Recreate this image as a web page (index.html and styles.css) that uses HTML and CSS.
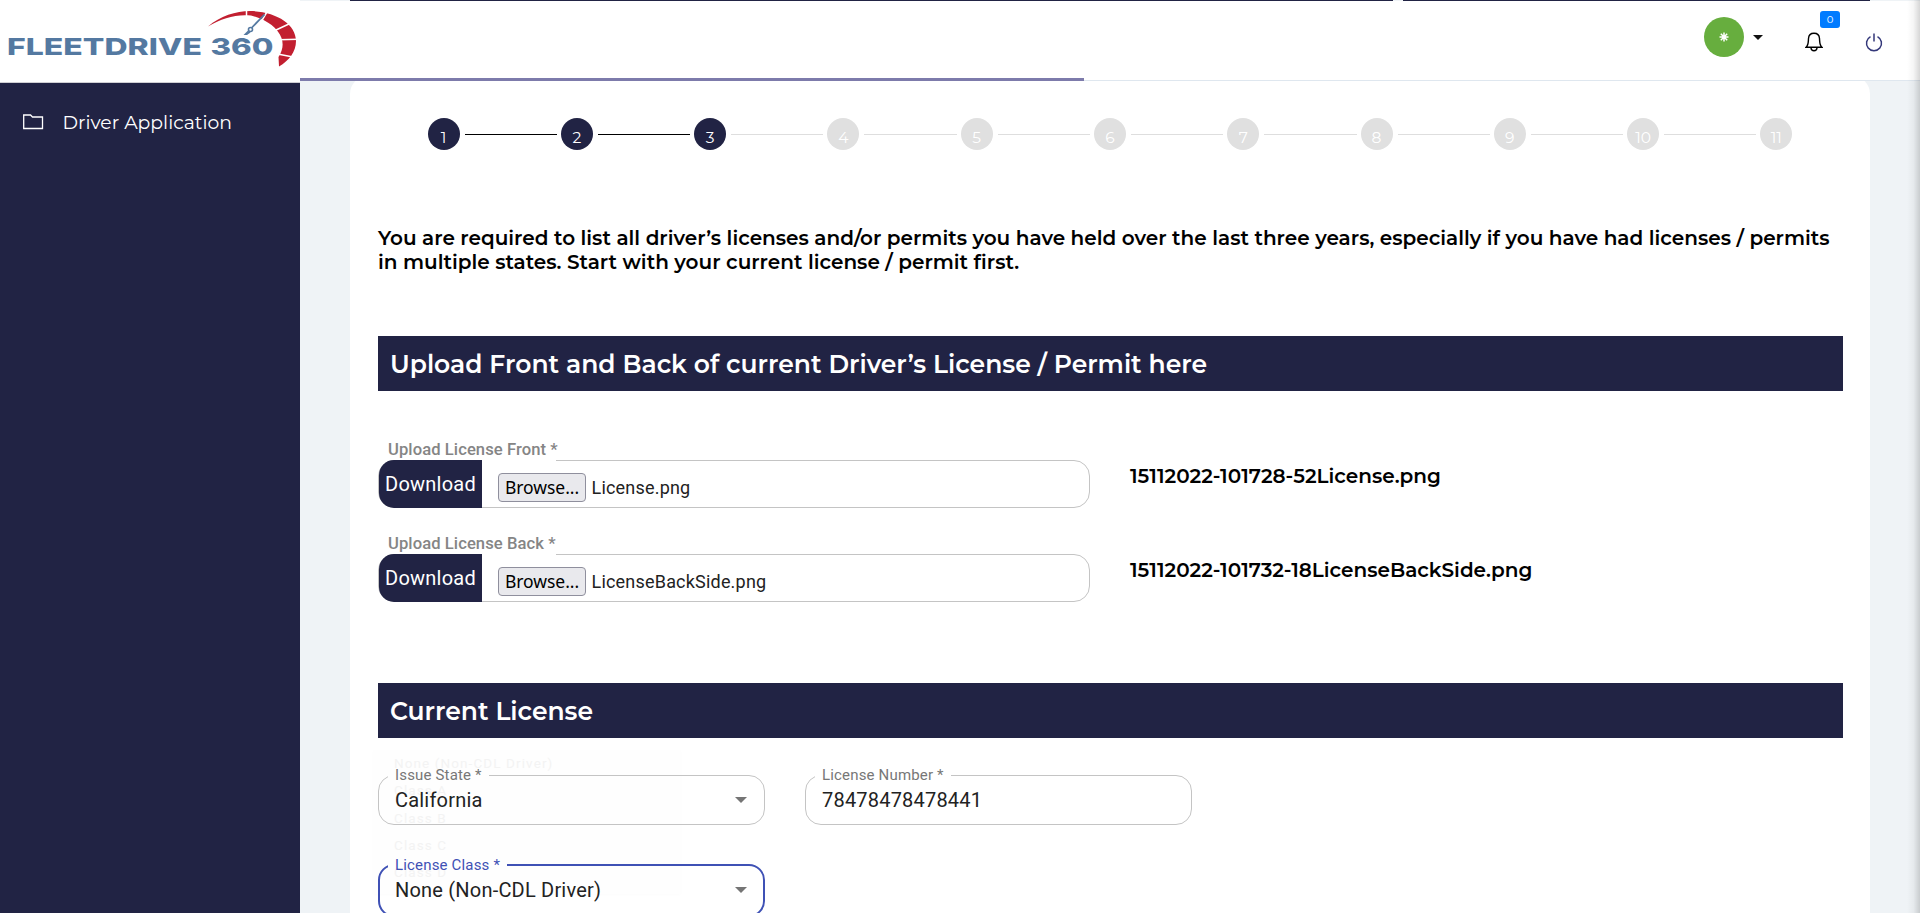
FILE: index.html
```html
<!DOCTYPE html>
<html lang="en">
<head>
<meta charset="utf-8">
<title>FleetDrive 360</title>
<link rel="stylesheet" href="styles.css">
</head>
<body>
<div class="app">
  <aside class="sidebar">
    <div class="brand">
      <svg width="300" height="82" viewBox="0 0 300 82">
        <text class="brand-text" x="7" y="55.200" textLength="195" lengthAdjust="spacingAndGlyphs">FLEETDRIVE</text>
        <text class="brand-text" x="210.500" y="55.200" textLength="63" lengthAdjust="spacingAndGlyphs">360</text>
        <path fill="#c21f30" d="M208 26.500C220 16 236 11 250 11C276 11.500 296 24 296 41C296 52 289 60.500 279 66.500L278.500 57C283 50 283.500 44 281.500 38C278 28 266 19 251 15.500C236 14 222 18 208 26.500Z"/>
        <path stroke="#fff" stroke-width="1.500" fill="none" d="M246.500 10V19M267.500 11L261 22M291 23L275 30.500M298 39.300L279 39.700M293 57L275 53.500"/>
        <path stroke="#5479a1" stroke-width="1.800" fill="none" d="M264.500 14.500L251.500 28"/>
        <circle cx="250.500" cy="29.500" r="2" fill="#fff" stroke="#5479a1" stroke-width="1.600"/>
        <path fill="#5479a1" d="M248 30.500L250.500 32.500L247 35H243.500Z"/>
      </svg>
    </div>
    <nav class="nav">
      <a class="nav-item">
        <svg width="21" height="16" viewBox="0 0 21 16"><path d="M.7 1H7.500L9.500 3H19.500V14.500H.7Z" fill="none" stroke="#fff" stroke-width="1.300"/></svg>
        <span>Driver Application</span>
      </a>
    </nav>
  </aside>
  <div class="main">
    <div class="strip"><i class="strip-a"></i><i class="strip-b"></i></div>
    <header class="topbar">
      <div class="avatar"><svg width="10" height="10" viewBox="-5 -5 10 10"><path d="M-4.500 0H4.500M0-4.500V4.500M-3.200-3.200L3.200 3.200M-3.200 3.200L3.200-3.200" stroke="#fff" stroke-width="1.500"/></svg></div>
      <svg class="caret" width="10" height="5" viewBox="0 0 10 5"><path d="M0 0H10L5 5Z" fill="#111"/></svg>
      <div class="bell">
        <svg width="18" height="20" viewBox="0 0 18 20" fill="none" stroke="#000" stroke-width="1.400"><path d="M1 15.300H17C14.500 13.500 14.800 11 14.500 6.500C14.300 3 12 1.200 9 1.200S3.700 3 3.500 6.500C3.200 11 3.500 13.500 1 15.300ZM6 16C6.300 19.700 11.700 19.700 12 16"/></svg>
        <span class="count">0</span>
      </div>
      <svg class="power" width="18" height="20" viewBox="0 0 18 20" fill="none" stroke="#34387a" stroke-width="1.500"><path d="M9 .5V8.500M5.500 3.600A7.500 7.500 0 1 0 12.500 3.600"/></svg>
    </header>
    <div class="progress"></div>
    <main class="card">
      <ol class="steps">
        <li class="done ln"><b>1</b></li><li class="done ln"><b>2</b></li><li class="done"><b>3</b></li><li><b>4</b></li><li><b>5</b></li><li><b>6</b></li><li><b>7</b></li><li><b>8</b></li><li><b>9</b></li><li><b>10</b></li><li><b>11</b></li>
      </ol>
      <p class="intro">You are required to list all driver’s licenses and/or permits you have held over the last three years, especially if you have had licenses / permits<br>in multiple states. Start with your current license / permit first.</p>
      <h2 class="banner">Upload Front and Back of current Driver’s License / Permit here</h2>
      <section class="uploads">
        <div class="upload">
          <div class="upload-field">
            <label class="upload-label">Upload License Front *</label>
            <div class="upload-box"><a class="download">Download</a><span class="browse">Browse...</span><span class="picked">License.png</span></div>
          </div>
          <div class="filename">15112022-101728-52License.png</div>
        </div>
        <div class="upload">
          <div class="upload-field">
            <label class="upload-label">Upload License Back *</label>
            <div class="upload-box"><a class="download">Download</a><span class="browse">Browse...</span><span class="picked">LicenseBackSide.png</span></div>
          </div>
          <div class="filename">15112022-101732-18LicenseBackSide.png</div>
        </div>
      </section>
      <h2 class="banner">Current License</h2>
      <section class="fields">
        <ul class="fading-menu"><li>None (Non-CDL Driver)</li><li>Class A</li><li>Class B</li><li>Class C</li><li>Class D</li></ul>
        <fieldset class="field"><legend>Issue State *</legend><div class="value">California<svg width="12" height="6" viewBox="0 0 12 6"><path d="M0 0H12L6 6Z" fill="#757575"/></svg></div></fieldset>
        <fieldset class="field"><legend>License Number *</legend><div class="value">78478478478441</div></fieldset>
        <fieldset class="field focused"><legend>License Class *</legend><div class="value">None (Non-CDL Driver)<svg width="12" height="6" viewBox="0 0 12 6"><path d="M0 0H12L6 6Z" fill="#757575"/></svg></div></fieldset>
      </section>
    </main>
  </div>
  <div class="edge-shadow"></div>
</div>
</body>
</html>
```
FILE: styles.css
```css
* { box-sizing: border-box; }
body { margin: 0; font-family: Montserrat, Inter, "Liberation Sans", sans-serif; color: #000; }
.app { position: relative; display: flex; width: 1920px; height: 913px; overflow: hidden; background: #eff3f6; }

.sidebar { width: 300px; flex: none; background: #212344; }
.brand { height: 83px; background: #fff; border-bottom: 1px solid #cfcfd4; }
.brand svg { display: block; }
.brand-text { font-family: Inter, sans-serif; font-weight: 800; font-size: 23.500px; fill: #5479a1; }
.nav { padding-top: 19px; }
.nav-item { display: flex; align-items: center; height: 40px; padding-left: 23px; gap: 18.500px; color: #fff; font-size: 18.800px; }

.main { width: 1620px; flex: none; display: flex; flex-direction: column; }
.strip { height: 1px; flex: none; display: flex; padding-left: 50px; gap: 10px; }
.strip-a { width: 1043px; background: #212344; }
.strip-b { width: 467px; background: #212344; }
.topbar { position: relative; z-index: 2; height: 80px; flex: none; display: flex; justify-content: flex-end; align-items: flex-start; padding-right: 37px; background: #fff; border-bottom: 1px solid #dfe7ef; }
.avatar { width: 40px; height: 40px; margin-top: 16px; border-radius: 50%; background: #67ae3e; display: flex; align-items: center; justify-content: center; }
.caret { margin: 34px 42px 0 9px; }
.bell { position: relative; width: 18px; height: 20px; margin-top: 31px; margin-right: 42px; }
.bell svg { display: block; }
.count { position: absolute; left: 15px; top: -21px; width: 20px; height: 17px; border-radius: 3px; background: #007bff; color: #fff; font-size: 10px; line-height: 17px; text-align: center; }
.power { margin-top: 32px; }
.progress { position: relative; z-index: 3; width: 784px; height: 3px; flex: none; margin-top: -3px; background: #7d7bab; }

.card { width: 1520px; height: 900px; margin: -5px 0 0 50px; padding: 0 27px 0 28px; flex: none; background: #fff; border-radius: 18px; }
.steps { list-style: none; margin: 0 0 0 -1px; padding: 42px 0 0; display: grid; grid-template-columns: repeat(11, 1fr); height: 74px; }
.steps li { position: relative; display: flex; justify-content: center; }
.steps b { width: 32px; height: 32px; border-radius: 50%; background: #e0e0e0; color: #fff; font-weight: 400; font-size: 15.500px; line-height: 39px; text-align: center; }
.steps .done b { background: #212344; }
.steps li:not(:last-child)::after { content: ""; position: absolute; left: calc(50% + 21px); top: 16px; width: calc(100% - 41px); height: 1px; background: #dedede; }
.steps li.ln::after { background: #000; }

.intro { margin: 76px 0 0; height: 48px; font-size: 20px; line-height: 24px; font-weight: 600; white-space: nowrap; }
.banner { height: 55px; margin: 62px 0 0; padding-left: 12px; background: #212344; color: #fff; font-size: 25px; line-height: 57px; font-weight: 600; white-space: nowrap; }

.uploads { height: 230px; padding-top: 47px; }
.upload { display: flex; height: 94px; }
.upload-field { width: 712px; }
.upload-label { display: block; height: 22px; width: max-content; padding-left: 10px; font: 500 16.600px/24px Roboto, sans-serif; letter-spacing: .08px; color: #858585; }
.upload-box { position: relative; display: flex; height: 48px; border: 1px solid #c4c4c4; border-radius: 16px; font: 18px Roboto, sans-serif; letter-spacing: .2px; color: #222; }
.upload-box::after { content: ""; position: absolute; left: 103px; top: -1px; width: 74px; height: 1px; background: #fff; }
.download { width: 103px; margin: -1px 0; border-radius: 15px 0 0 15px; background: #212344; color: #fff; font-size: 20px; letter-spacing: .22px; line-height: 48px; text-align: center; }
.browse { width: 88px; height: 29px; margin: 12px 5.500px 0 16px; border: 1px solid #8f8f9d; border-radius: 4px; background: #e9e9ed; color: #000; font: 17.500px/27px "Noto Sans", sans-serif; letter-spacing: -.05px; text-align: center; }
.picked { line-height: 54px; }
.filename { margin-left: 40px; padding-top: 26px; font-size: 20px; line-height: 24px; font-weight: 600; white-space: nowrap; }

.fields { position: relative; display: grid; grid-template-columns: 387px 387px; column-gap: 40px; grid-auto-rows: 90px; padding-top: 29px; font-family: Roboto, sans-serif; }
.field { position: relative; margin: 0; padding: 0 0 0 9px; height: 58px; min-width: 0; border: 1px solid #c4c4c4; border-radius: 16px; }
.field legend { height: 16px; padding: 0 7px; font-size: 15px; line-height: 16px; letter-spacing: .17px; color: #777; }
.value { display: flex; align-items: center; justify-content: space-between; height: 34px; padding: 0 17px 0 7px; font-size: 20px; letter-spacing: .2px; color: #222; }
.field.focused { height: 60px; border: 2px solid #3f51b5; padding-left: 8px; }
.focused legend { color: #3f51b5; }
.focused .value { padding-right: 16px; }
.fading-menu { position: absolute; left: -5px; top: 12px; width: 308px; height: 144px; margin: 0; padding: 0 0 0 21px; list-style: none; font-size: 13.500px; line-height: 27.300px; letter-spacing: 1.100px; color: #f3f3f3; background: #fefefe; box-shadow: 0 1px 4px rgba(0,0,0,.015); }

.edge-shadow { position: absolute; right: 0; top: 0; width: 13px; height: 913px; background: linear-gradient(to right, rgba(0,0,0,0), rgba(0,0,0,.04) 50%, rgba(0,0,0,.16)); z-index: 4; }
```
